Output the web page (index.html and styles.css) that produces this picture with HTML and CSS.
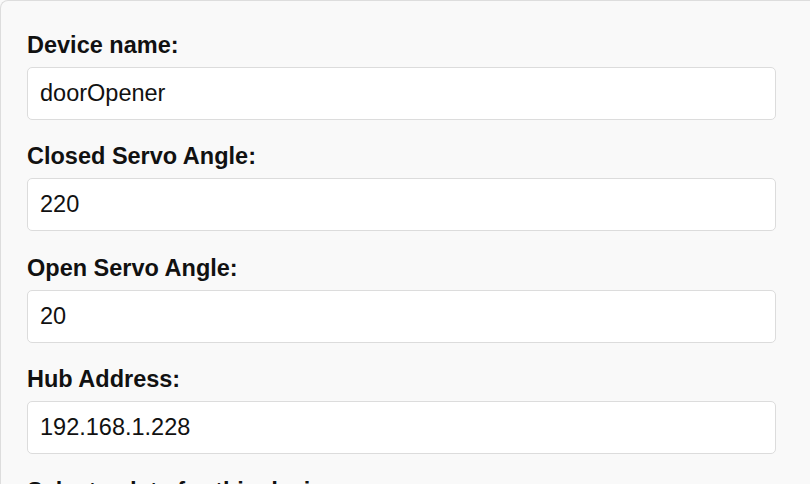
FILE: index.html
```html
<!DOCTYPE html>
<html lang="en">
<head>
<meta charset="utf-8">
<title>Device settings</title>
<link rel="stylesheet" href="styles.css">
</head>
<body>
<form class="panel">
  <div class="field">
    <label class="label" for="name">Device name:</label>
    <input class="input" id="name" type="text" value="doorOpener">
  </div>
  <div class="field">
    <label class="label" for="closed">Closed Servo Angle:</label>
    <input class="input" id="closed" type="text" value="220">
  </div>
  <div class="field">
    <label class="label" for="open">Open Servo Angle:</label>
    <input class="input" id="open" type="text" value="20">
  </div>
  <div class="field">
    <label class="label" for="hub">Hub Address:</label>
    <input class="input" id="hub" type="text" value="192.168.1.228">
  </div>
  <div class="field">
    <label class="label" for="data">Select a data for this device:</label>
  </div>
</form>
</body>
</html>
```
FILE: styles.css
```css
html, body {
  margin: 0;
  padding: 0;
  background: #f9f9f9;
  overflow: hidden;
}
body {
  font-family: "Liberation Sans", Arial, sans-serif;
}
.panel {
  display: flex;
  flex-direction: column;
  gap: 23.5px;
  box-sizing: border-box;
  width: 100%;
  min-height: 600px;
  margin: 0;
  padding: 30.5px 34px 0 26px;
  background: #f9f9f9;
  border-top: 1px solid #dddddd;
  border-left: 1px solid #dddddd;
  border-top-left-radius: 8px;
}
.field {
  display: flex;
  flex-direction: column;
  gap: 8px;
}
.label {
  display: block;
  font-size: 23.5px;
  font-weight: bold;
  line-height: normal;
  color: #111;
}
.input {
  box-sizing: border-box;
  width: 100%;
  height: 53px;
  margin: 0;
  padding: 0 12px;
  font-family: "Liberation Sans", Arial, sans-serif;
  font-size: 23.5px;
  color: #111;
  background: #fff;
  border: 1px solid #dcdcdc;
  border-radius: 5px;
  outline: none;
}
```
